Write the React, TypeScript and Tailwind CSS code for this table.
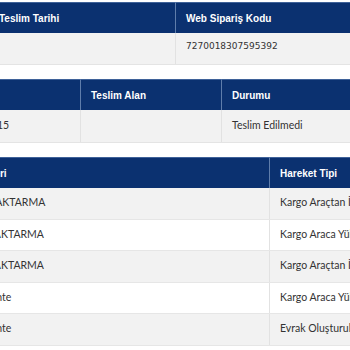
const head =
	"bg-[#0b3170] border-t border-[#3f6299] text-white font-bold text-[10px] h-[31px] flex items-center px-[10px] font-['Liberation_Sans',Arial,sans-serif]"
const cell = "h-full flex items-center px-[10px] text-[10.5px] text-[#333] font-['Lato','Open_Sans',sans-serif]"

const moves = [
	{ place: 'SAMSUN AKTARMA', type: 'Kargo Araçtan İndirildi', bg: 'bg-[#f2f2f2]' },
	{ place: 'ANKARA AKTARMA', type: 'Kargo Araca Yüklendi', bg: 'bg-white' },
	{ place: 'ANKARA AKTARMA', type: 'Kargo Araçtan İndirildi', bg: 'bg-[#f2f2f2]' },
	{ place: 'Kartal Acente', type: 'Kargo Araca Yüklendi', bg: 'bg-white' },
	{ place: 'Kartal Acente', type: 'Evrak Oluşturuldu', bg: 'bg-[#f2f2f2]' },
]

export default function App() {
	return (
		<div className="w-[350px] h-[350px] overflow-hidden bg-white pt-[2px]">
			{/* teslim bilgisi */}
			<div className="ml-[-11px] w-[520px]">
				<div className="flex">
					<div className={`${head} w-[187px] border-r border-r-[#5f7dab]`}>Teslim Tarihi</div>
					<div className={`${head} flex-1`}>Web Sipariş Kodu</div>
				</div>
				<div className="flex h-[32px] bg-[#f2f2f2] border-b border-[#e4e4e4]">
					<div className={`${cell} w-[187px] border-r border-[#e2e2e2]`}></div>
					<div className="h-full flex items-start pt-[7px] px-[10px] text-[9px] text-[#333] font-['DejaVu_Sans',Verdana,sans-serif]">
						7270018307595392
					</div>
				</div>
			</div>

			{/* kargo */}
			<div className="mt-[14px] ml-[-24px] w-[520px]">
				<div className="flex">
					<div className={`${head} w-[105px] border-r border-r-[#5f7dab]`}>Kg</div>
					<div className={`${head} w-[141px] border-r border-r-[#5f7dab]`}>Teslim Alan</div>
					<div className={`${head} flex-1`}>Durumu</div>
				</div>
				<div className="flex h-[33px] bg-[#f2f2f2] border-b border-[#e4e4e4]">
					<div className={`${cell} w-[105px] border-r border-[#e2e2e2]`}>
						<span className="pl-[11px]">15</span>
					</div>
					<div className={`${cell} w-[141px] border-r border-[#e2e2e2]`}></div>
					<div className={cell}>Teslim Edilmedi</div>
				</div>
			</div>

			{/* hareketler */}
			<div className="mt-[14px] ml-[-61px] w-[560px]">
				<div className="flex">
					<div className={`${head} w-[331px] border-r border-r-[#5f7dab]`}>Hareket Yeri</div>
					<div className={`${head} flex-1`}>Hareket Tipi</div>
				</div>
				{moves.map((m, i) => (
					<div key={i} className={`flex h-[31.5px] border-b border-[#e6e6e6] ${m.bg}`}>
						<div className={`${cell} w-[331px] border-r border-[#e2e2e2]`}>{m.place}</div>
						<div className={cell}>{m.type}</div>
					</div>
				))}
			</div>
		</div>
	)
}
